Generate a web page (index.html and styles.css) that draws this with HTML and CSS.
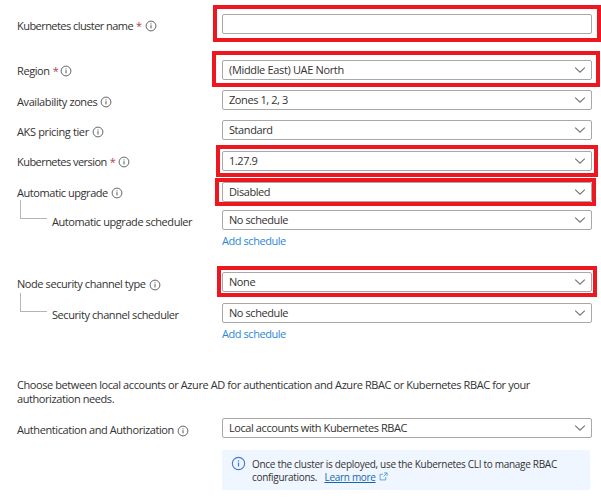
FILE: index.html
```html
<!DOCTYPE html>
<html lang="en">
<head>
<meta charset="utf-8">
<title>Cluster details</title>
<link rel="stylesheet" href="styles.css">
</head>
<body>
<svg class="defs" width="0" height="0">
  <symbol id="info" viewBox="0 0 12 12"><circle cx="6" cy="6" r="4.9" fill="none" stroke="currentColor" stroke-width=".9"/><path d="M6 5.2v3.2M6 3.4v1" stroke="currentColor" stroke-width="1" fill="none"/></symbol>
  <symbol id="chev" viewBox="0 0 12 8"><path d="M1.2 1.6 6 6.2l4.8-4.6" stroke="currentColor" stroke-width="1.2" fill="none"/></symbol>
</svg>
<main class="form">
  <div class="row name">
    <label class="label"><span>Kubernetes cluster name</span><b class="req">*</b><svg class="info"><use href="#info"/></svg></label>
    <div class="field"><i class="mark mark-name"></i></div>
  </div>
  <div class="row region">
    <label class="label"><span>Region</span><b class="req">*</b><svg class="info"><use href="#info"/></svg></label>
    <div class="field"><span>(Middle East) UAE North</span><svg class="chev"><use href="#chev"/></svg><i class="mark mark-region"></i></div>
  </div>
  <div class="row zones">
    <label class="label"><span>Availability zones</span><svg class="info"><use href="#info"/></svg></label>
    <div class="field"><span>Zones 1, 2, 3</span><svg class="chev"><use href="#chev"/></svg></div>
  </div>
  <div class="row tier">
    <label class="label"><span>AKS pricing tier</span><svg class="info"><use href="#info"/></svg></label>
    <div class="field"><span>Standard</span><svg class="chev"><use href="#chev"/></svg></div>
  </div>
  <div class="row version">
    <label class="label"><span>Kubernetes version</span><b class="req">*</b><svg class="info"><use href="#info"/></svg></label>
    <div class="field"><span>1.27.9</span><svg class="chev"><use href="#chev"/></svg><i class="mark mark-version"></i></div>
  </div>
  <div class="row upgrade">
    <label class="label"><span>Automatic upgrade</span><svg class="info"><use href="#info"/></svg></label>
    <div class="field"><span>Disabled</span><svg class="chev"><use href="#chev"/></svg><i class="mark mark-upgrade"></i></div>
  </div>
  <div class="row schedule">
    <label class="label child"><i class="branch"></i><span>Automatic upgrade scheduler</span></label>
    <div class="field"><span>No schedule</span><svg class="chev"><use href="#chev"/></svg></div>
  </div>
  <a class="add">Add schedule</a>
  <div class="row node">
    <label class="label"><span>Node security channel type</span><svg class="info"><use href="#info"/></svg></label>
    <div class="field"><span>None</span><svg class="chev"><use href="#chev"/></svg><i class="mark mark-node"></i></div>
  </div>
  <div class="row security">
    <label class="label child"><i class="branch"></i><span>Security channel scheduler</span></label>
    <div class="field"><span>No schedule</span><svg class="chev"><use href="#chev"/></svg></div>
  </div>
  <a class="add">Add schedule</a>
  <p class="intro">Choose between local accounts or Azure AD for authentication and Azure RBAC or Kubernetes RBAC for your<br>authorization needs.</p>
  <div class="row auth">
    <label class="label"><span>Authentication and Authorization</span><svg class="info"><use href="#info"/></svg></label>
    <div class="field"><span>Local accounts with Kubernetes RBAC</span><svg class="chev"><use href="#chev"/></svg></div>
  </div>
  <aside class="notice">
    <svg class="notice-icon"><use href="#info"/></svg>
    <p>Once the cluster is deployed, use the Kubernetes CLI to manage RBAC<br>configurations. <a class="more">Learn more</a><svg class="ext" viewBox="0 0 10 10"><path d="M4.5 2.5H1.2v6.3h6.3V5.5M5.6 1h3.4v3.4M9 1 5 5" fill="none" stroke="currentColor" stroke-width=".9"/></svg></p>
  </aside>
</main>
</body>
</html>
```
FILE: styles.css
```css
* { box-sizing: border-box; }
body {
  margin: 0;
  background: #fff;
  color: #333231;
  font: 11px/14px "Open Sans", "Noto Sans", sans-serif;
  letter-spacing: -0.42px;
}
.defs { position: absolute; }
.form { width: 601px; height: 502px; padding: 14px 9px 0 17px; overflow: hidden; }
.row { display: grid; grid-template-columns: 205px 370px; height: 20px; }
.label { display: flex; align-items: center; height: 20px; padding-top: 3px; white-space: nowrap; }
.name .label span, .version .label span { letter-spacing: -0.55px; }
.region .label, .version .label, .upgrade .label { padding-top: 1px; }
.zones .label span { letter-spacing: -0.4px; }
.upgrade .label span { letter-spacing: -0.44px; }
.tier .label span { letter-spacing: -0.36px; }
.region .label span { letter-spacing: -0.4px; }
.req { margin-left: 3px; color: #b5404a; font-weight: 400; }
.info { width: 12px; height: 12px; margin: 1px 0 0 3px; color: #555; }
.region .info { margin-left: 2px; }
.auth .info, .node .info { margin-top: 3px; }
.field {
  position: relative;
  display: flex;
  align-items: center;
  justify-content: space-between;
  height: 20px;
  padding: 0 6px;
  border: 1px solid #a9a8a7;
  border-radius: 2px;
  white-space: nowrap;
}
.region .field { letter-spacing: -0.34px; }
.chev { width: 12px; height: 8px; margin-right: -1px; color: #777; }
.region { margin-top: 26px; }
.zones, .tier { margin-top: 10px; }
.version { margin-top: 11px; }
.upgrade { margin-top: 11px; }
.schedule { margin-top: 8px; }
.node { margin-top: 24px; }
.security { margin-top: 11px; }
.auth { margin-top: 12px; }
.mark { position: absolute; border: 4px solid #ee161f; }
.mark-name { left: -10px; right: -10px; top: -10px; bottom: -9px; }
.mark-region { left: -11px; right: -9px; top: -10px; bottom: -8px; }
.mark-version { left: -7px; right: -7px; top: -7px; bottom: -7px; }
.mark-upgrade { left: -8px; right: -5px; top: -5px; bottom: -5px; }
.mark-node { left: -6px; right: -6px; top: -7px; bottom: -6px; }
.child { position: relative; padding-left: 35px; padding-top: 3px; }
.branch {
  position: absolute;
  left: 3px;
  top: -10px;
  width: 27px;
  height: 19px;
  border: solid #b5b5b5;
  border-width: 0 0 1px 1px;
}
.add { display: block; height: 18px; margin-left: 205px; padding-top: 4px; color: #2b88d8; letter-spacing: -0.44px; }
.intro { height: 28px; margin: 37px 0 0; }
.notice {
  display: flex;
  width: 368px;
  height: 40px;
  margin: 12px 0 0 205px;
  padding: 6px 0 0 9px;
  background: #f0f6ff;
  font-size: 10px;
  line-height: 13px;
  letter-spacing: -0.3px;
  white-space: nowrap;
}
.notice-icon { width: 15px; height: 15px; margin-right: 6px; color: #3b78e7; }
.notice p { margin: 2px 0 0; }
.more { margin-left: 5px; color: #1068b0; text-decoration: underline; }
.ext { width: 9px; height: 9px; margin-left: 3px; color: #3c96e0; }
```
